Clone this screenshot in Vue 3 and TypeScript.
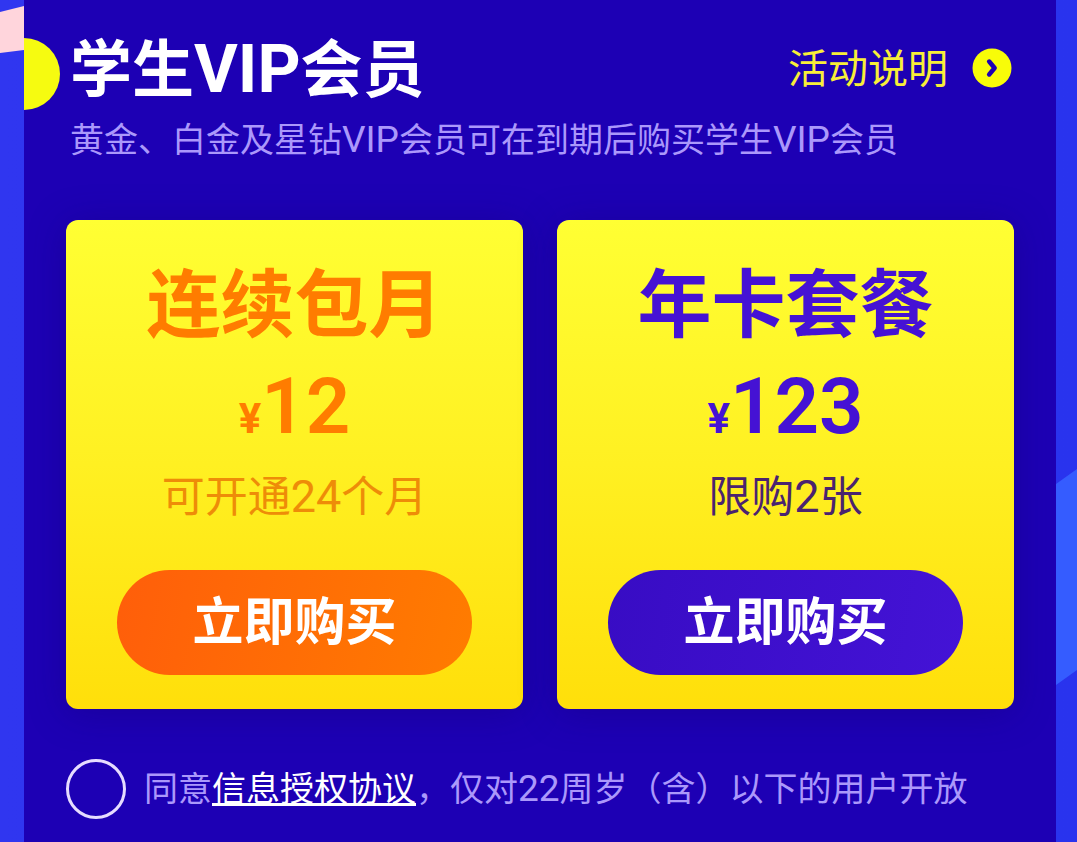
<script setup lang="ts">
import { ref } from 'vue'

interface Plan {
  id: string
  name: string
  price: number
  note: [string, string, string]
}

const plans: Plan[] = [
  { id: 'monthly', name: '连续包月', price: 12, note: ['可开通', '24', '个月'] },
  { id: 'yearly', name: '年卡套餐', price: 123, note: ['限购', '2', '张'] },
]

const agreed = ref(false)
</script>

<template>
  <div class="page">
    <svg class="decor decor-left" viewBox="0 0 24 60" aria-hidden="true">
      <path d="M0 12 L24 6 V50 L0 53 Z" fill="#ffd5dc" />
    </svg>
    <svg class="decor decor-right" viewBox="0 0 21 220" aria-hidden="true">
      <path d="M0 15 L21 0 V201 L0 216 Z" fill="#355cff" />
    </svg>

    <main class="panel">
      <span class="dot" aria-hidden="true"></span>
      <header class="head">
        <h1 class="title">学生<span class="latin">VIP</span>会员</h1>
        <a class="rules" href="#rules">
          活动说明
          <svg class="arrow" viewBox="0 0 40 40" aria-hidden="true">
            <circle cx="20" cy="20" r="19.5" fill="#f8fc08" />
            <path d="M17.2 13.6 L22.6 20 L17.2 26.4" fill="none" stroke="#1d00b4" stroke-width="4.6" stroke-linecap="round" stroke-linejoin="round" />
          </svg>
        </a>
      </header>
      <p class="subtitle">黄金、白金及星钻<span class="latin">VIP</span>会员可在到期后购买学生<span class="latin">VIP</span>会员</p>

      <section class="plans">
        <article v-for="plan in plans" :key="plan.id" class="plan" :class="plan.id">
          <h2 class="name">{{ plan.name }}</h2>
          <p class="price"><span class="currency">¥</span>{{ plan.price }}</p>
          <p class="note">{{ plan.note[0] }}<span class="latin">{{ plan.note[1] }}</span>{{ plan.note[2] }}</p>
          <button class="buy" type="button">立即购买</button>
        </article>
      </section>

      <div class="agreement">
        <input id="agree" v-model="agreed" class="check" type="checkbox" />
        <p class="terms">
          <label for="agree">同意</label><a href="#agreement">信息授权协议</a><label for="agree">，仅对<span class="latin">22</span>周岁（含）以下的用户开放</label>
        </p>
      </div>
    </main>
  </div>
</template>

<style>
body {
  margin: 0;
  background: #2934ee;
}
</style>

<style scoped>
.page {
  position: relative;
  box-sizing: border-box;
  min-height: 100vh;
  padding: 0 21px 0 24px;
  display: flex;
  background: linear-gradient(90deg, #3036f0, #2933ee);
  font-family: Roboto, "Noto Sans CJK SC", sans-serif;
  overflow: hidden;
}

.decor {
  position: absolute;
}

.decor-left {
  left: 0;
  top: 0;
  width: 24px;
  height: 60px;
}

.decor-right {
  right: 0;
  top: 469px;
  width: 21px;
  height: 220px;
}

.panel {
  position: relative;
  flex: 1;
  min-width: 0;
  box-sizing: border-box;
  padding: 34px 42px 20px;
  background: #1d00b4;
  overflow: hidden;
}

.dot {
  position: absolute;
  left: -36px;
  top: 38px;
  width: 72px;
  height: 72px;
  border-radius: 50%;
  background: #f6fb10;
}

.head {
  display: flex;
  align-items: center;
  justify-content: space-between;
  height: 72px;
  padding: 0 2px 0 4px;
}

.title {
  margin: 0;
  font-size: 62px;
  line-height: 72px;
  font-weight: 700;
  color: #fff;
  white-space: nowrap;
}

.title .latin {
  font-size: 67px;
}

.rules {
  display: flex;
  align-items: flex-start;
  gap: 24px;
  font-size: 40px;
  line-height: 72px;
  color: #f8ee38;
  text-decoration: none;
  white-space: nowrap;
}

.arrow {
  width: 40px;
  height: 40px;
  margin-top: 14px;
}

.subtitle {
  margin: 10px 0 0;
  padding-left: 4px;
  font-size: 34px;
  line-height: 48px;
  color: #ab98fb;
  white-space: nowrap;
}

.subtitle .latin,
.terms .latin {
  font-size: 37px;
}

.plans {
  display: grid;
  grid-template-columns: 1fr 1fr;
  gap: 34px;
  margin-top: 56px;
}

.plan {
  display: flex;
  flex-direction: column;
  align-items: center;
  padding: 36px 51px 34px;
  border-radius: 12px;
  background: linear-gradient(180deg, #ffff33, #fff022 50%, #ffdf0a);
  box-shadow: 0 4px 36px rgba(20, 0, 120, 0.4);
}

.monthly {
  color: #ff7c00;
}

.yearly {
  color: #4512d4;
}

.name {
  margin: 0;
  font-size: 74px;
  line-height: 100px;
  font-weight: 700;
}

.price {
  margin: 9px 0 0;
  font-size: 78px;
  line-height: 84px;
  font-weight: 600;
}

.currency {
  font-size: 42px;
  font-weight: 700;
}

.note {
  margin: 6px 0 0;
  font-size: 43px;
  line-height: 60px;
}

.note .latin {
  font-size: 45px;
}

.monthly .note {
  color: #ee8c08;
}

.yearly .note {
  color: #4a2370;
}

.buy {
  width: 100%;
  height: 105px;
  margin-top: 43px;
  padding: 0;
  border: 0;
  border-radius: 53px;
  font-family: inherit;
  font-size: 51px;
  line-height: 72px;
  font-weight: 700;
  color: #fff;
  cursor: pointer;
}

.monthly .buy {
  background: linear-gradient(100deg, #ff5e0a, #ff7c00);
}

.yearly .buy {
  background: linear-gradient(100deg, #380cc4, #4413d6);
}

.agreement {
  display: flex;
  align-items: center;
  gap: 18px;
  margin-top: 50px;
}

.check {
  appearance: none;
  flex: none;
  box-sizing: border-box;
  width: 60px;
  height: 60px;
  margin: 0;
  border: 3px solid #e6dcff;
  border-radius: 50%;
}

.check:checked {
  background: #f6fb10;
}

.terms {
  margin: 0;
  font-size: 34px;
  line-height: 48px;
  color: #ab98fb;
  white-space: nowrap;
}

.terms a {
  color: #fff;
  text-decoration: underline;
  text-decoration-thickness: 3px;
  text-underline-offset: 2px;
  text-decoration-skip-ink: none;
}
</style>
